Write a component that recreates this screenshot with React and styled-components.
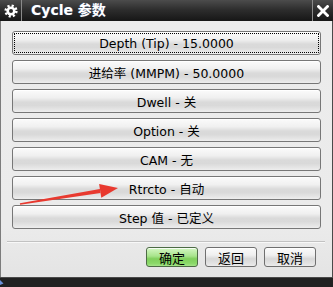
import React from "react";
import styled, { createGlobalStyle } from "styled-components";

const Global = createGlobalStyle`
  html, body { margin: 0; padding: 0; background: #1e1e1e; }
  body { width: 333px; height: 287px; overflow: hidden; }
  #root { width: 333px; height: 287px; }
`;

const FONT = `"DejaVu Sans", "Noto Sans CJK SC", sans-serif`;

const Window = styled.div`
  position: relative;
  width: 333px;
  height: 287px;
  display: flex;
  flex-direction: column;
  font-family: ${FONT};
  overflow: hidden;
`;

const TitleBar = styled.div`
  height: 21px;
  display: flex;
  align-items: stretch;
  background: linear-gradient(to bottom, #4c4c4c 0%, #2e2e2e 45%, #161616 100%);
  color: #fff;
  flex: none;
`;

const IconCell = styled.div`
  width: ${(p) => p.$w}px;
  display: flex;
  align-items: center;
  justify-content: center;
  border-left: ${(p) => (p.$sepLeft ? "1px solid #8a8a8a" : "none")};
  border-right: ${(p) => (p.$sepRight ? "1px solid #8a8a8a" : "none")};
  flex: none;
`;

const Title = styled.div`
  flex: 1;
  font-weight: bold;
  font-size: 14px;
  line-height: 21px;
  padding-left: 9px;
  white-space: nowrap;
  text-shadow: 0 0 1px rgba(120, 160, 255, 0.5);
`;

const Body = styled.div`
  flex: 1;
  display: flex;
  flex-direction: column;
  background: linear-gradient(to bottom, #ececec 0%, #ebebeb 80%, #e4e4e4 100%);
  border-left: 1px solid #7c7c7c;
  border-right: 1px solid #4a4a4a;
  padding: 10px 11px 0 11px;
`;

const List = styled.div`
  display: flex;
  flex-direction: column;
  gap: 5px;
`;

const OptButton = styled.div`
  height: 24px;
  box-sizing: border-box;
  border: 1px solid #777;
  border-radius: 3px;
  background: linear-gradient(
    to bottom,
    #fbfbfb 0%,
    #f0f0f0 35%,
    #dadada 55%,
    #d9d9d9 70%,
    #e6e6e6 90%,
    #eeeeee 100%
  );
  box-shadow: inset 0 1px 0 #fff;
  display: flex;
  align-items: center;
  justify-content: center;
  font-size: 12.5px;
  color: #000;
  white-space: nowrap;
  outline: ${(p) => (p.$focus ? "1px dotted #000" : "none")};
  outline-offset: -3px;
`;

const Separator = styled.div`
  margin: 12px -4px 0 -5px;
  height: 1px;
  background: #c2c2c2;
  border-bottom: 1px solid #f8f8f8;
`;

const Footer = styled.div`
  display: flex;
  justify-content: flex-end;
  gap: 7px;
  margin-top: 4px;
  padding-right: 5px;
`;

const FootButton = styled.div`
  width: 52px;
  height: 20px;
  box-sizing: border-box;
  border: 1px solid ${(p) => (p.$primary ? "#4d6b45" : "#6f6f6f")};
  border-radius: 3px;
  background: ${(p) =>
    p.$primary
      ? "linear-gradient(to bottom, #d4f7c4 0%, #a8e48c 45%, #7fcf5c 60%, #8ad868 85%, #a4e488 100%)"
      : "linear-gradient(to bottom, #fbfbfb 0%, #efefef 40%, #d8d8d8 60%, #e2e2e2 85%, #ececec 100%)"};
  box-shadow: inset 0 1px 0 rgba(255, 255, 255, 0.8);
  display: flex;
  align-items: center;
  justify-content: center;
  font-size: 13px;
  color: #000;
`;

const BottomBar = styled.div`
  height: 9px;
  flex: none;
  background: #212121;
  border-top: 1px solid #4a4a4a;
`;

const Overlay = styled.svg`
  position: absolute;
  left: 0;
  top: 0;
  pointer-events: none;
`;

const Gear = () => (
  <svg width="14" height="14" viewBox="0 0 14 14">
    <circle cx="7" cy="7" r="5.3" fill="none" stroke="#fff" strokeWidth="2.6" strokeDasharray="2.1 2.06" />
    <circle cx="7" cy="7" r="4.6" fill="#fff" />
    <circle cx="7" cy="7" r="2" fill="#2a2a2a" />
  </svg>
);

const Close = () => (
  <svg width="12" height="12" viewBox="0 0 12 12">
    <path d="M1.5 1.5 L10.5 10.5 M10.5 1.5 L1.5 10.5" stroke="#fff" strokeWidth="2.8" strokeLinecap="square" />
  </svg>
);

const items = [
  "Depth (Tip) - 15.0000",
  "进给率 (MMPM) - 50.0000",
  "Dwell - 关",
  "Option - 关",
  "CAM - 无",
  "Rtrcto - 自动",
  "Step 值 - 已定义",
];

export default function App() {
  return (
    <>
      <Global />
      <Window>
        <TitleBar>
          <IconCell $w={21} $sepRight>
            <Gear />
          </IconCell>
          <Title>Cycle 参数</Title>
          <IconCell $w={20} $sepLeft>
            <Close />
          </IconCell>
        </TitleBar>
        <Body>
          <List>
            {items.map((t, i) => (
              <OptButton key={t} $focus={i === 0}>
                {t}
              </OptButton>
            ))}
          </List>
          <Separator />
          <Footer>
            <FootButton $primary>确定</FootButton>
            <FootButton>返回</FootButton>
            <FootButton>取消</FootButton>
          </Footer>
        </Body>
        <BottomBar />
        <Overlay width="333" height="287" viewBox="0 0 333 287">
          <polygon points="20.1,204.8 19.9,203.2 99.9,188.9 100.5,192.9" fill="#e8392f" />
          <polygon points="118,188 99.1,184 101.3,197.8" fill="#e8392f" />
          <polygon points="0,280 3.5,283.5 0,285" fill="#6a8fd8" />
        </Overlay>
      </Window>
    </>
  );
}
